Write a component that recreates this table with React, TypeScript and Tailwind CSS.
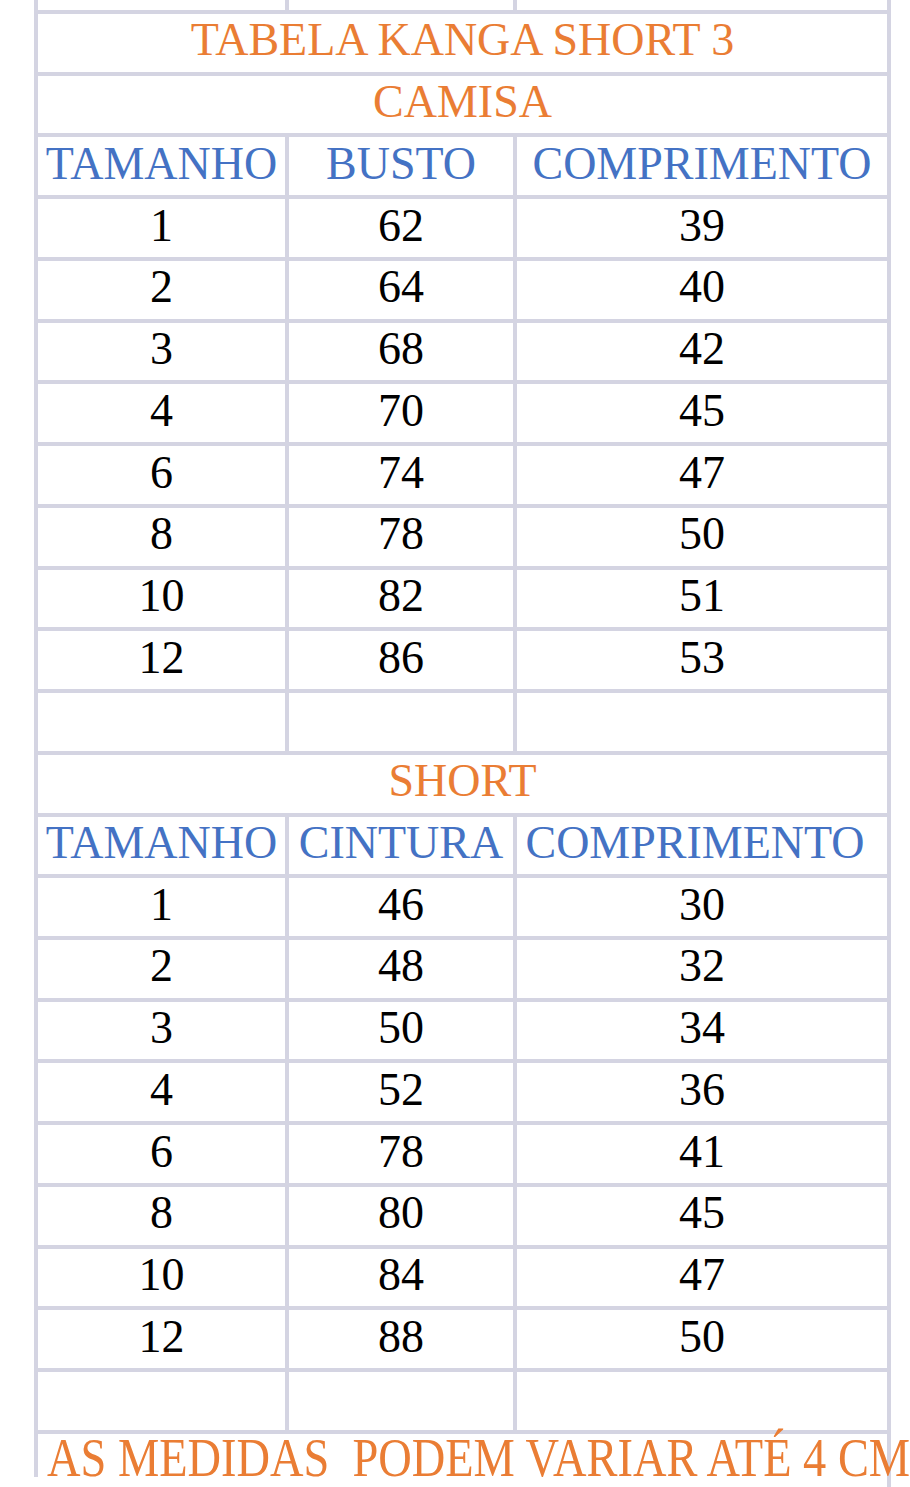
const LINE = "border-[#d4d4e2]";
const FONT = { fontFamily: '"Liberation Serif", "Times New Roman", serif' };

const camisa = [
  ["1", "62", "39"],
  ["2", "64", "40"],
  ["3", "68", "42"],
  ["4", "70", "45"],
  ["6", "74", "47"],
  ["8", "78", "50"],
  ["10", "82", "51"],
  ["12", "86", "53"],
];

const short = [
  ["1", "46", "30"],
  ["2", "48", "32"],
  ["3", "50", "34"],
  ["4", "52", "36"],
  ["6", "78", "41"],
  ["8", "80", "45"],
  ["10", "84", "47"],
  ["12", "88", "50"],
];

function TitleRow({ text }: { text: string }) {
  return (
    <div className={`flex h-[61.74px] items-center justify-center border-t-4 ${LINE} pb-[5px] text-[46px] leading-none text-[#ea7d34]`}>
      {text}
    </div>
  );
}

function Row({ cells, head, lastPad }: { cells: string[]; head?: boolean; lastPad?: boolean }) {
  const color = head ? "text-[#4472c4]" : "text-black";
  return (
    <div className={`grid h-[61.74px] grid-cols-[247px_228px_374px] border-t-4 ${LINE} text-[46px] leading-none ${color}`}>
      <div className="flex items-center justify-center pb-[5px]">{cells[0]}</div>
      <div className={`flex items-center justify-center border-l-4 ${LINE} pb-[5px]`}>{cells[1]}</div>
      <div className={`flex items-center justify-center border-l-4 ${LINE} pb-[5px] ${lastPad ? "pr-[14px]" : ""}`}>
        {cells[2]}
      </div>
    </div>
  );
}

export default function App() {
  return (
    <div className="min-h-[1487px] w-[910px] overflow-hidden bg-white" style={FONT}>
      <div className={`ml-[34px] w-[857px] border-x-4 ${LINE}`}>
        <div className="grid h-[10px] grid-cols-[247px_228px_374px]">
          <div />
          <div className={`border-l-4 ${LINE}`} />
          <div className={`border-l-4 ${LINE}`} />
        </div>

        <TitleRow text="TABELA KANGA SHORT 3" />
        <TitleRow text="CAMISA" />
        <Row cells={["TAMANHO", "BUSTO", "COMPRIMENTO"]} head />
        {camisa.map((r) => (
          <Row key={"c" + r[0]} cells={r} />
        ))}
        <Row cells={["", "", ""]} />

        <TitleRow text="SHORT" />
        <Row cells={["TAMANHO", "CINTURA", "COMPRIMENTO"]} head lastPad />
        {short.map((r) => (
          <Row key={"s" + r[0]} cells={r} />
        ))}
        <Row cells={["", "", ""]} />

        <div className={`h-[47px] border-t-4 ${LINE}`}>
          <div className="-mt-[4px] w-[900px] pl-[9px] text-[46.4px] leading-none whitespace-pre text-[#ea7d34]">
            <span className="inline-block origin-top scale-y-[1.2]">AS MEDIDAS  PODEM VARIAR ATÉ 4 CM</span>
          </div>
        </div>
      </div>
      <div className="ml-[34px] h-[10px] w-[857px]">
        <div className={`ml-auto h-full w-[4px] border-r-4 ${LINE}`} />
      </div>
    </div>
  );
}
